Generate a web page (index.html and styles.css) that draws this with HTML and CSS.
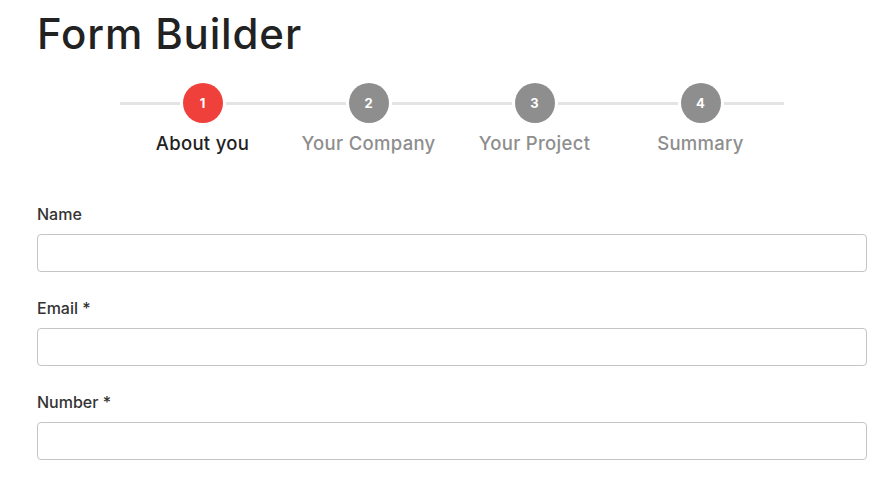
FILE: index.html
```html
<!DOCTYPE html>
<html lang="en">
<head>
    <meta charset="UTF-8">
    <meta name="viewport" content="width=device-width, initial-scale=1.0">
    <title>Form Builder</title>
    <link rel="stylesheet" href="styles.css">
</head>
<body>
    <div class="page">
        <h1>Form Builder</h1>

        <ol class="stepper">
            <li class="step active">
                <span class="step-dot">1</span>
                <span class="step-label">About you</span>
            </li>
            <li class="step">
                <span class="step-dot">2</span>
                <span class="step-label">Your Company</span>
            </li>
            <li class="step">
                <span class="step-dot">3</span>
                <span class="step-label">Your Project</span>
            </li>
            <li class="step">
                <span class="step-dot">4</span>
                <span class="step-label">Summary</span>
            </li>
        </ol>

        <form class="form">
            <div class="form-group">
                <label for="name">Name</label>
                <input type="text" id="name">
            </div>
            <div class="form-group">
                <label for="email">Email *</label>
                <input type="email" id="email">
            </div>
            <div class="form-group">
                <label for="number">Number *</label>
                <input type="text" id="number">
            </div>
        </form>
    </div>
</body>
</html>
```

FILE: styles.css
```css
body {
    margin: 0;
    font-family: Inter, "Noto Sans", sans-serif;
    color: #222;
    background-color: #fff;
}
.page {
    width: 829px;
    padding: 9px 0 0 37px;
}
h1 {
    margin: 0;
    font-size: 42px;
    line-height: 50px;
    font-weight: 500;
    letter-spacing: 0.85px;
    color: #222;
}

/* Pasos */
.stepper {
    position: relative;
    display: grid;
    grid-template-columns: repeat(4, 166px);
    width: 664px;
    margin: 24px auto 0;
    padding: 0;
    list-style: none;
}
.stepper::before {
    content: "";
    position: absolute;
    left: 0;
    right: 0;
    top: 19px;
    height: 3px;
    background-color: #e4e4e4;
}
.step {
    position: relative;
    display: flex;
    flex-direction: column;
    align-items: center;
    gap: 8px;
}
.step-dot {
    width: 40px;
    height: 40px;
    border-radius: 50%;
    background-color: #8e8e8e;
    box-shadow: 0 0 0 3px #fff;
    color: #fff;
    font-size: 13px;
    font-weight: 700;
    display: flex;
    align-items: center;
    justify-content: center;
}
.step-label {
    font-size: 18.5px;
    line-height: 24px;
    font-weight: 500;
    color: #8e8e8e;
    letter-spacing: 0.3px;
}
.step.active .step-dot {
    background-color: #f0403c;
}
.step.active .step-label {
    color: #222;
}

/* Formulario */
.form {
    margin-top: 49px;
}
.form-group {
    margin-bottom: 26px;
}
.form-group label {
    display: block;
    font-size: 16px;
    line-height: 20px;
    font-weight: 500;
    color: #333;
    margin-bottom: 10px;
}
.form-group input {
    display: block;
    box-sizing: border-box;
    width: 830px;
    height: 38px;
    border: 1px solid #c4c4c4;
    border-radius: 4px;
    background-color: #fff;
    font-size: 16px;
    padding: 0 10px;
}
```
